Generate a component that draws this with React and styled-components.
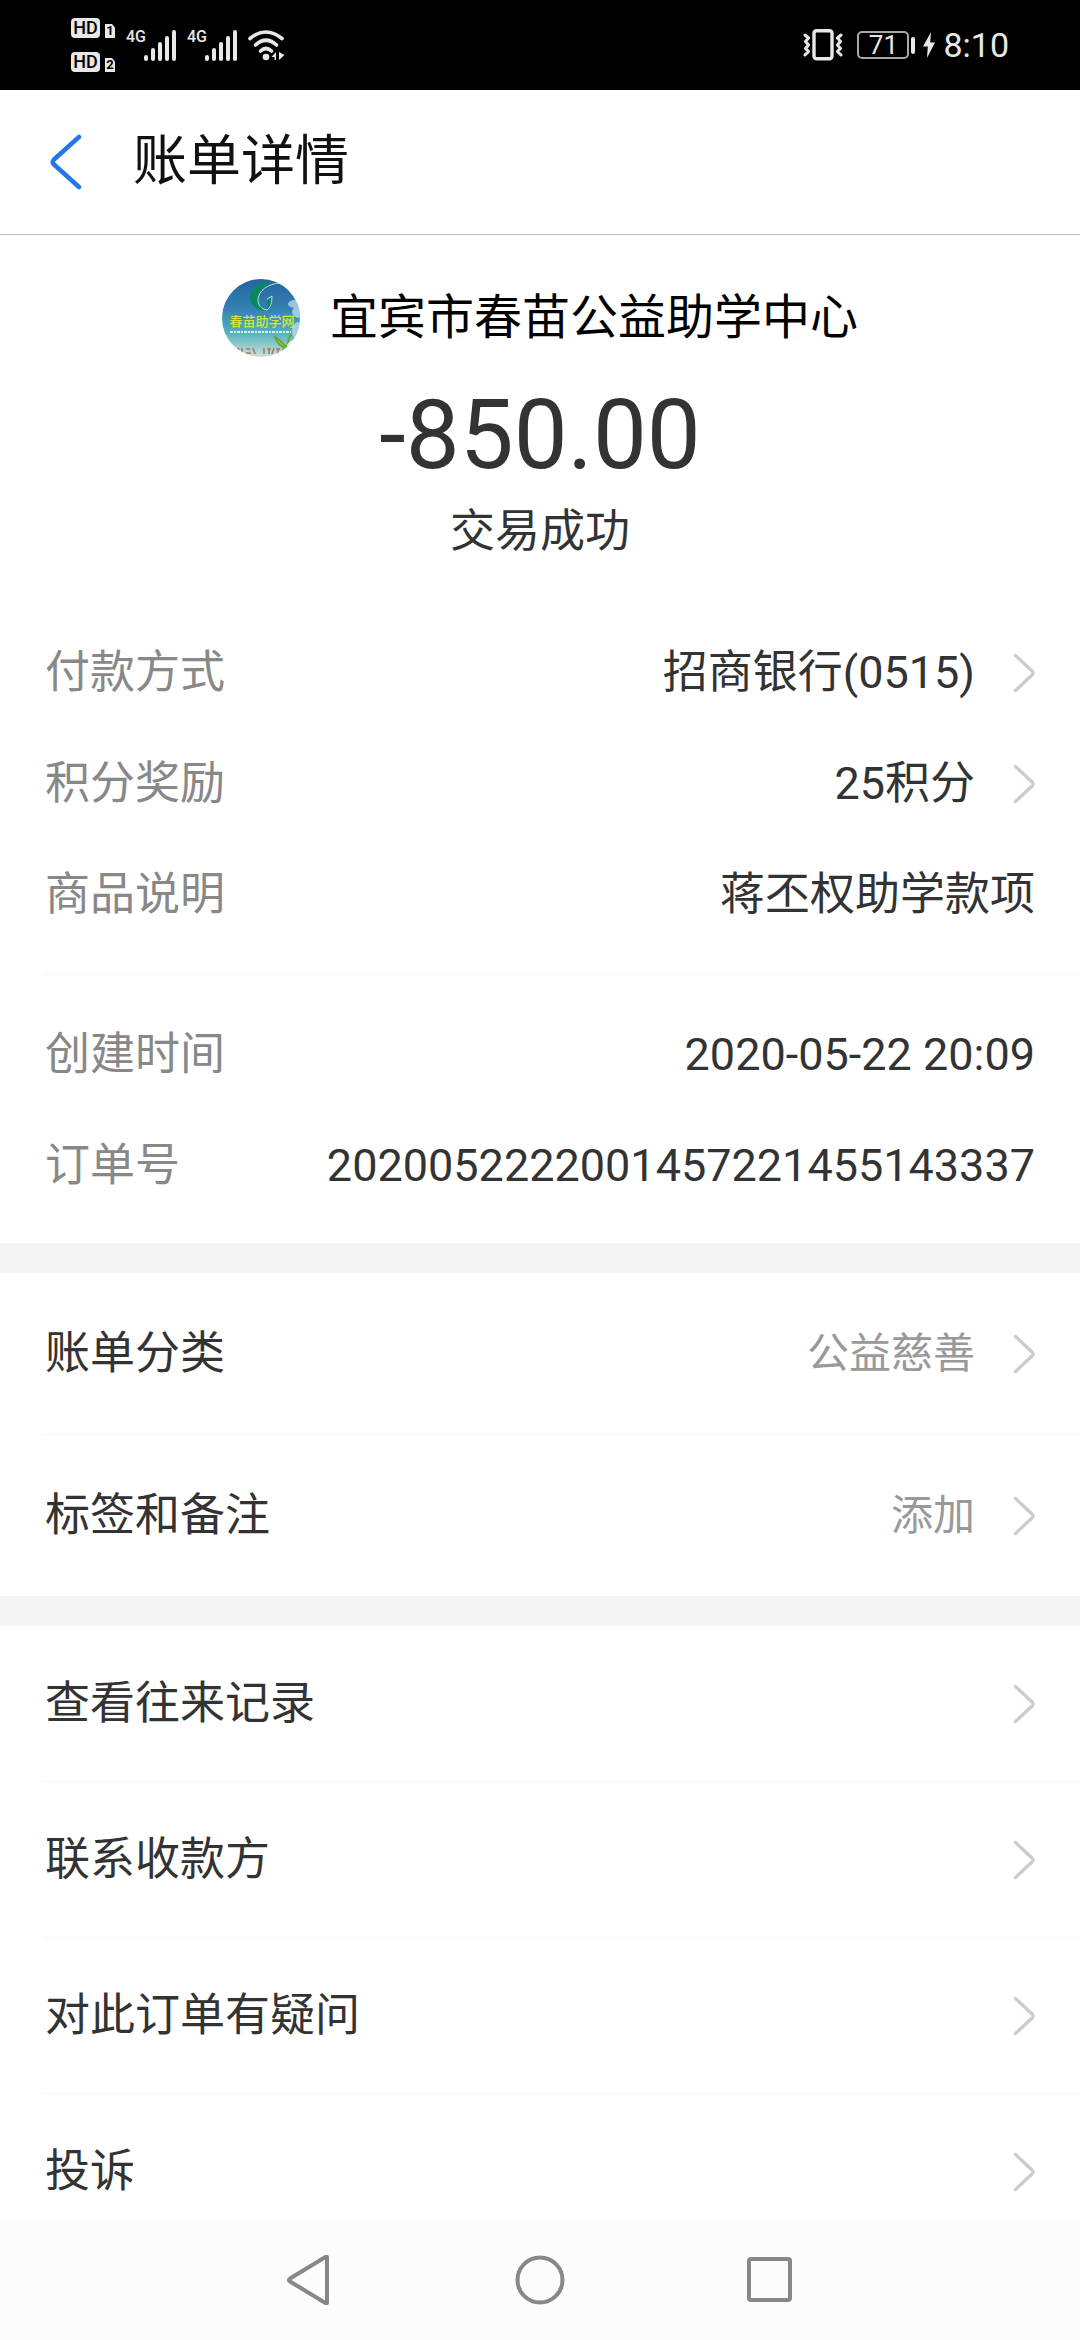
import React from "react";
import styled, { createGlobalStyle } from "styled-components";

const GlobalStyle = createGlobalStyle`
  * {
    box-sizing: border-box;
  }

  body {
    margin: 0;
    background: #fff;
    color: #333;
    font-family: Roboto, "Noto Sans CJK SC", sans-serif;
  }

  button {
    border: none;
    background: none;
    padding: 0;
    font: inherit;
    color: inherit;
    cursor: pointer;
  }
`;

const Page = styled.div`
  display: flex;
  flex-direction: column;
  height: 100vh;
  overflow: hidden;
`;

/* ---------- status bar ---------- */

const StatusBar = styled.div`
  display: flex;
  justify-content: space-between;
  align-items: center;
  flex-shrink: 0;
  height: 90px;
  padding: 0 71px;
  background: #000;
  color: #e8e8e8;

  svg {
    display: block;
  }
`;

const StatusGroup = styled.div`
  display: flex;
  align-items: center;
  gap: ${({ $gap }) => $gap}px;
`;

const SimList = styled.div`
  display: flex;
  flex-direction: column;
  gap: 14px;
`;

const Sim = styled.div`
  display: flex;
  align-items: flex-end;
  gap: 5px;
`;

const HdBadge = styled.span`
  width: 29px;
  height: 20px;
  border-radius: 4px;
  background: #e8e8e8;
  color: #000;
  font-size: 18px;
  font-weight: 500;
  line-height: 20px;
  text-align: center;
`;

const SimNumber = styled.span`
  width: 10px;
  height: 14px;
  background: #e8e8e8;
  clip-path: polygon(0 0, 70% 0, 100% 25%, 100% 100%, 0 100%);
  color: #000;
  font-size: 13px;
  font-weight: 700;
  line-height: 14px;
  text-align: center;
`;

const Signal = styled.div`
  display: flex;
  align-items: flex-start;
`;

const NetworkType = styled.span`
  width: 18px;
  font-size: 16px;
  font-weight: 500;
  line-height: 14px;
`;

const Battery = styled.div`
  display: flex;
  align-items: center;
  gap: 2px;
`;

const BatteryLevel = styled.span`
  width: 52px;
  height: 28px;
  border: 2px solid #a8a8a8;
  border-radius: 5px;
  font-size: 26px;
  line-height: 24px;
  text-align: center;
`;

const BatteryTip = styled.span`
  width: 4px;
  height: 17px;
  border-radius: 2px;
  background: #e8e8e8;
`;

const Clock = styled.span`
  font-size: 34px;
  line-height: 40px;
`;

/* ---------- header ---------- */

const Header = styled.header`
  display: flex;
  align-items: center;
  flex-shrink: 0;
  height: 145px;
  padding-left: 49px;
  gap: 50px;
  border-bottom: 1px solid #c4c4c4;

  button,
  svg {
    display: block;
  }
`;

const Title = styled.h1`
  margin: 0;
  color: #111;
  font-size: 54px;
  font-weight: 400;
  line-height: 64px;
`;

/* ---------- content ---------- */

const Content = styled.main`
  flex: 1;
  min-height: 0;
  overflow: hidden;
`;

const Summary = styled.section`
  display: flex;
  flex-direction: column;
  align-items: center;
  padding: 44px 45px 57px;
`;

const Merchant = styled.div`
  display: flex;
  align-items: center;
  gap: 30px;
  margin-bottom: 30px;
`;

const MerchantName = styled.h2`
  margin: 0;
  color: #000;
  font-size: 48px;
  font-weight: 400;
  line-height: 56px;
`;

const Amount = styled.div`
  margin-bottom: 21px;
  font-size: 96px;
  line-height: 96px;
`;

const PayStatus = styled.div`
  font-size: 45px;
  line-height: 56px;
`;

const Details = styled.section`
  padding-bottom: 22px;
`;

const Row = styled.div`
  display: flex;
  align-items: center;
  width: 100%;
  height: ${({ $height }) => $height || 111}px;
  padding: 0 45px;
  font-size: 45px;
  line-height: 56px;
  text-align: left;
`;

const Label = styled.span`
  flex: 1;
  color: ${({ $muted }) => ($muted ? "#888" : "#333")};
`;

const Value = styled.span`
  color: ${({ $muted }) => ($muted ? "#999" : "#333")};
  font-size: ${({ $muted }) => ($muted ? 42 : 45)}px;
`;

const Chevron = styled.svg`
  display: block;
  flex-shrink: 0;
  width: 21px;
  height: 38px;
  margin-left: 39px;
  overflow: visible;
`;

const Divider = styled.hr`
  height: 1px;
  margin: ${({ $space }) => $space || 0}px 0 ${({ $space }) => $space || 0}px 45px;
  border: none;
  background: #f6f6f6;
`;

const Band = styled.div`
  height: 30px;
  background: #f4f4f4;
`;

/* ---------- system navigation ---------- */

const NavBar = styled.nav`
  display: flex;
  justify-content: center;
  align-items: center;
  flex-shrink: 0;
  gap: 180px;
  height: 121px;
  background: #fcfcfc;

  button,
  svg {
    display: block;
  }
`;

const SignalIcon = () => (
  <svg width="32" height="31" viewBox="0 0 32 31" fill="currentColor">
    <rect x="0" y="25" width="4" height="6" rx="2" />
    <rect x="7" y="18" width="4" height="13" rx="2" />
    <rect x="14" y="12" width="4" height="19" rx="2" />
    <rect x="21" y="6" width="4" height="25" rx="2" />
    <rect x="28" y="0" width="4" height="31" rx="2" />
  </svg>
);

const WifiIcon = () => (
  <svg width="38" height="31" viewBox="0 0 38 31" fill="none">
    <g stroke="currentColor" strokeWidth="3.6" strokeLinecap="round">
      <path d="M2 8.500Q18 -4.500 34 8.500" />
      <path d="M7.500 15Q18 5.500 28.500 15" />
      <path d="M12.500 21Q18 16 23.500 21" />
    </g>
    <circle cx="18" cy="27" r="3.300" fill="currentColor" />
    <path d="M28 22V30H26.500V27H23.500ZM31 22L36.500 25L31 30Z" fill="currentColor" />
  </svg>
);

const VibrateIcon = () => (
  <svg width="40" height="32" viewBox="0 0 40 32" fill="none" stroke="currentColor">
    <rect x="11" y="1.800" width="18" height="28" rx="2.500" strokeWidth="3.400" />
    <path
      d="M2 6L5.500 9L2.500 12.500L5.500 16L2.500 19.500L5.500 22.500L2 26M38 6L34.500 9L37.500 12.500L34.500 16L37.500 19.500L34.500 22.500L38 26"
      strokeWidth="3"
      strokeLinecap="round"
      strokeLinejoin="round"
    />
  </svg>
);

const BoltIcon = () => (
  <svg width="12" height="26" viewBox="0 0 12 26" fill="currentColor">
    <path d="M8 0L0 14.500H4.800L4 26L12 10.500H7.200Z" />
  </svg>
);

const BackIcon = () => (
  <svg width="34" height="58" viewBox="0 0 34 58" fill="none">
    <path
      d="M30 4L5 26.500Q2.500 29 5 31.500L30 54"
      stroke="#2577e8"
      strokeWidth="4.500"
      strokeLinecap="round"
    />
  </svg>
);

const ArrowRight = () => (
  <Chevron viewBox="0 0 21 38" fill="none">
    <path
      d="M1.500 1.500L18.300 17.300Q20 19 18.300 20.700L1.500 36.500"
      stroke="#ccc"
      strokeWidth="3.300"
      strokeLinecap="round"
    />
  </Chevron>
);

const MerchantLogo = () => (
  <svg width="78" height="78" viewBox="0 0 78 78">
    <defs>
      <linearGradient id="sky" x1="0" y1="0" x2="0" y2="1">
        <stop offset="0" stopColor="#24639f" />
        <stop offset="0.4" stopColor="#3583b4" />
        <stop offset="0.7" stopColor="#58b3bf" />
        <stop offset="0.88" stopColor="#9dd0cb" />
        <stop offset="1" stopColor="#d2e2d3" />
      </linearGradient>
      <clipPath id="round">
        <circle cx="39" cy="39" r="39" />
      </clipPath>
    </defs>
    <g clipPath="url(#round)">
      <rect width="78" height="78" fill="url(#sky)" />
      <g fill="#c3dcec" opacity="0.75">
        <ellipse cx="73" cy="25" rx="7" ry="4" />
        <ellipse cx="77" cy="33" rx="7" ry="6" />
        <ellipse cx="76" cy="52" rx="6" ry="9" />
      </g>
      <path
        d="M52 3C37 2 28 9 28 18C28 27 35 32 44 31C38 28 36 23 37 17C38 10 43 5 52 3Z"
        fill="#078a61"
      />
      <path d="M44 31C49 29 51 25 50 20L45 22C46 26 45 29 44 31Z" fill="#078a61" />
      <path
        d="M58 4C45 5 37 12 36 20C36 26 39 30 45 31C49 28 50 23 50 17L45 20"
        fill="none"
        stroke="#b5e3d2"
        strokeWidth="1"
      />
      <text
        x="40"
        y="47"
        textAnchor="middle"
        fontSize="13"
        fontWeight="500"
        fill="#d2e53c"
        fontFamily="Noto Sans CJK SC, sans-serif"
      >
        春苗助学网
      </text>
      <path d="M8 53H69" stroke="#d5ece9" strokeWidth="2" strokeDasharray="3 1 2 1" />
      <path
        d="M64 76C64 68 65 64 69 55M65 68C61 66 59 61 53 58C55 65 59 68 65 70"
        fill="#94c945"
        stroke="#68a440"
        strokeWidth="2"
      />
      <path d="M65 66C67 62 71 60 76 60C74 65 70 68 65 70Z" fill="#e4f1cc" />
      <path
        d="M16 69L18 75M20 69V75M24 70H28M24 74H29M31 69L33 75M42 69V75M45 70H49M47 69V75M52 69L50 75M54 70H58M56 69V75M61 70V75"
        stroke="#a9796b"
        strokeWidth="1.600"
      />
    </g>
  </svg>
);

const details = [
  { label: "付款方式", value: "招商银行(0515)", link: true },
  { label: "积分奖励", value: "25积分", link: true },
  { label: "商品说明", value: "蒋丕权助学款项" },
];

const orderInfo = [
  { label: "创建时间", value: "2020-05-22 20:09" },
  { label: "订单号", value: "2020052222001457221455143337" },
];

const settings = [
  { label: "账单分类", value: "公益慈善" },
  { label: "标签和备注", value: "添加" },
];

const actions = ["查看往来记录", "联系收款方", "对此订单有疑问", "投诉"];

const DetailRow = ({ label, value, link }) => (
  <Row as={link ? "button" : "div"}>
    <Label $muted>{label}</Label>
    <Value>{value}</Value>
    {link && <ArrowRight />}
  </Row>
);

const App = () => {
  return (
    <Page>
      <GlobalStyle />
      <StatusBar>
        <StatusGroup $gap={11}>
          <SimList>
            <Sim>
              <HdBadge>HD</HdBadge>
              <SimNumber>1</SimNumber>
            </Sim>
            <Sim>
              <HdBadge>HD</HdBadge>
              <SimNumber>2</SimNumber>
            </Sim>
          </SimList>
          <Signal>
            <NetworkType>4G</NetworkType>
            <SignalIcon />
          </Signal>
          <Signal>
            <NetworkType>4G</NetworkType>
            <SignalIcon />
          </Signal>
          <WifiIcon />
        </StatusGroup>
        <StatusGroup $gap={14}>
          <VibrateIcon />
          <StatusGroup $gap={8}>
            <Battery>
              <BatteryLevel>71</BatteryLevel>
              <BatteryTip />
            </Battery>
            <BoltIcon />
            <Clock>8:10</Clock>
          </StatusGroup>
        </StatusGroup>
      </StatusBar>

      <Header>
        <button type="button" aria-label="返回">
          <BackIcon />
        </button>
        <Title>账单详情</Title>
      </Header>

      <Content>
        <Summary>
          <Merchant>
            <MerchantLogo />
            <MerchantName>宜宾市春苗公益助学中心</MerchantName>
          </Merchant>
          <Amount>-850.00</Amount>
          <PayStatus>交易成功</PayStatus>
        </Summary>

        <Details>
          {details.map((item) => (
            <DetailRow key={item.label} {...item} />
          ))}
          <Divider $space={24} />
          {orderInfo.map((item) => (
            <DetailRow key={item.label} {...item} />
          ))}
        </Details>

        <Band />

        {settings.map((item, index) => (
          <React.Fragment key={item.label}>
            {index > 0 && <Divider />}
            <Row as="button" $height={161}>
              <Label>{item.label}</Label>
              <Value $muted>{item.value}</Value>
              <ArrowRight />
            </Row>
          </React.Fragment>
        ))}

        <Band />

        {actions.map((label, index) => (
          <React.Fragment key={label}>
            {index > 0 && <Divider />}
            <Row as="button" $height={155}>
              <Label>{label}</Label>
              <ArrowRight />
            </Row>
          </React.Fragment>
        ))}
      </Content>

      <NavBar>
        <button type="button" aria-label="返回上一页">
          <svg width="50" height="50" viewBox="0 0 50 50" fill="none">
            <path
              d="M42 2.500V47.500Q42 49 40.500 48L5 26.500Q3 25 5 23.500L40.500 2Q42 1 42 2.500Z"
              stroke="#888"
              strokeWidth="4"
              strokeLinejoin="round"
            />
          </svg>
        </button>
        <button type="button" aria-label="主屏幕">
          <svg width="50" height="50" viewBox="0 0 50 50" fill="none">
            <circle cx="25" cy="25" r="22.500" stroke="#888" strokeWidth="4" />
          </svg>
        </button>
        <button type="button" aria-label="最近任务">
          <svg width="50" height="50" viewBox="0 0 50 50" fill="none">
            <rect x="4" y="4" width="41" height="41" rx="2" stroke="#888" strokeWidth="4" />
          </svg>
        </button>
      </NavBar>
    </Page>
  );
};

export default App;
